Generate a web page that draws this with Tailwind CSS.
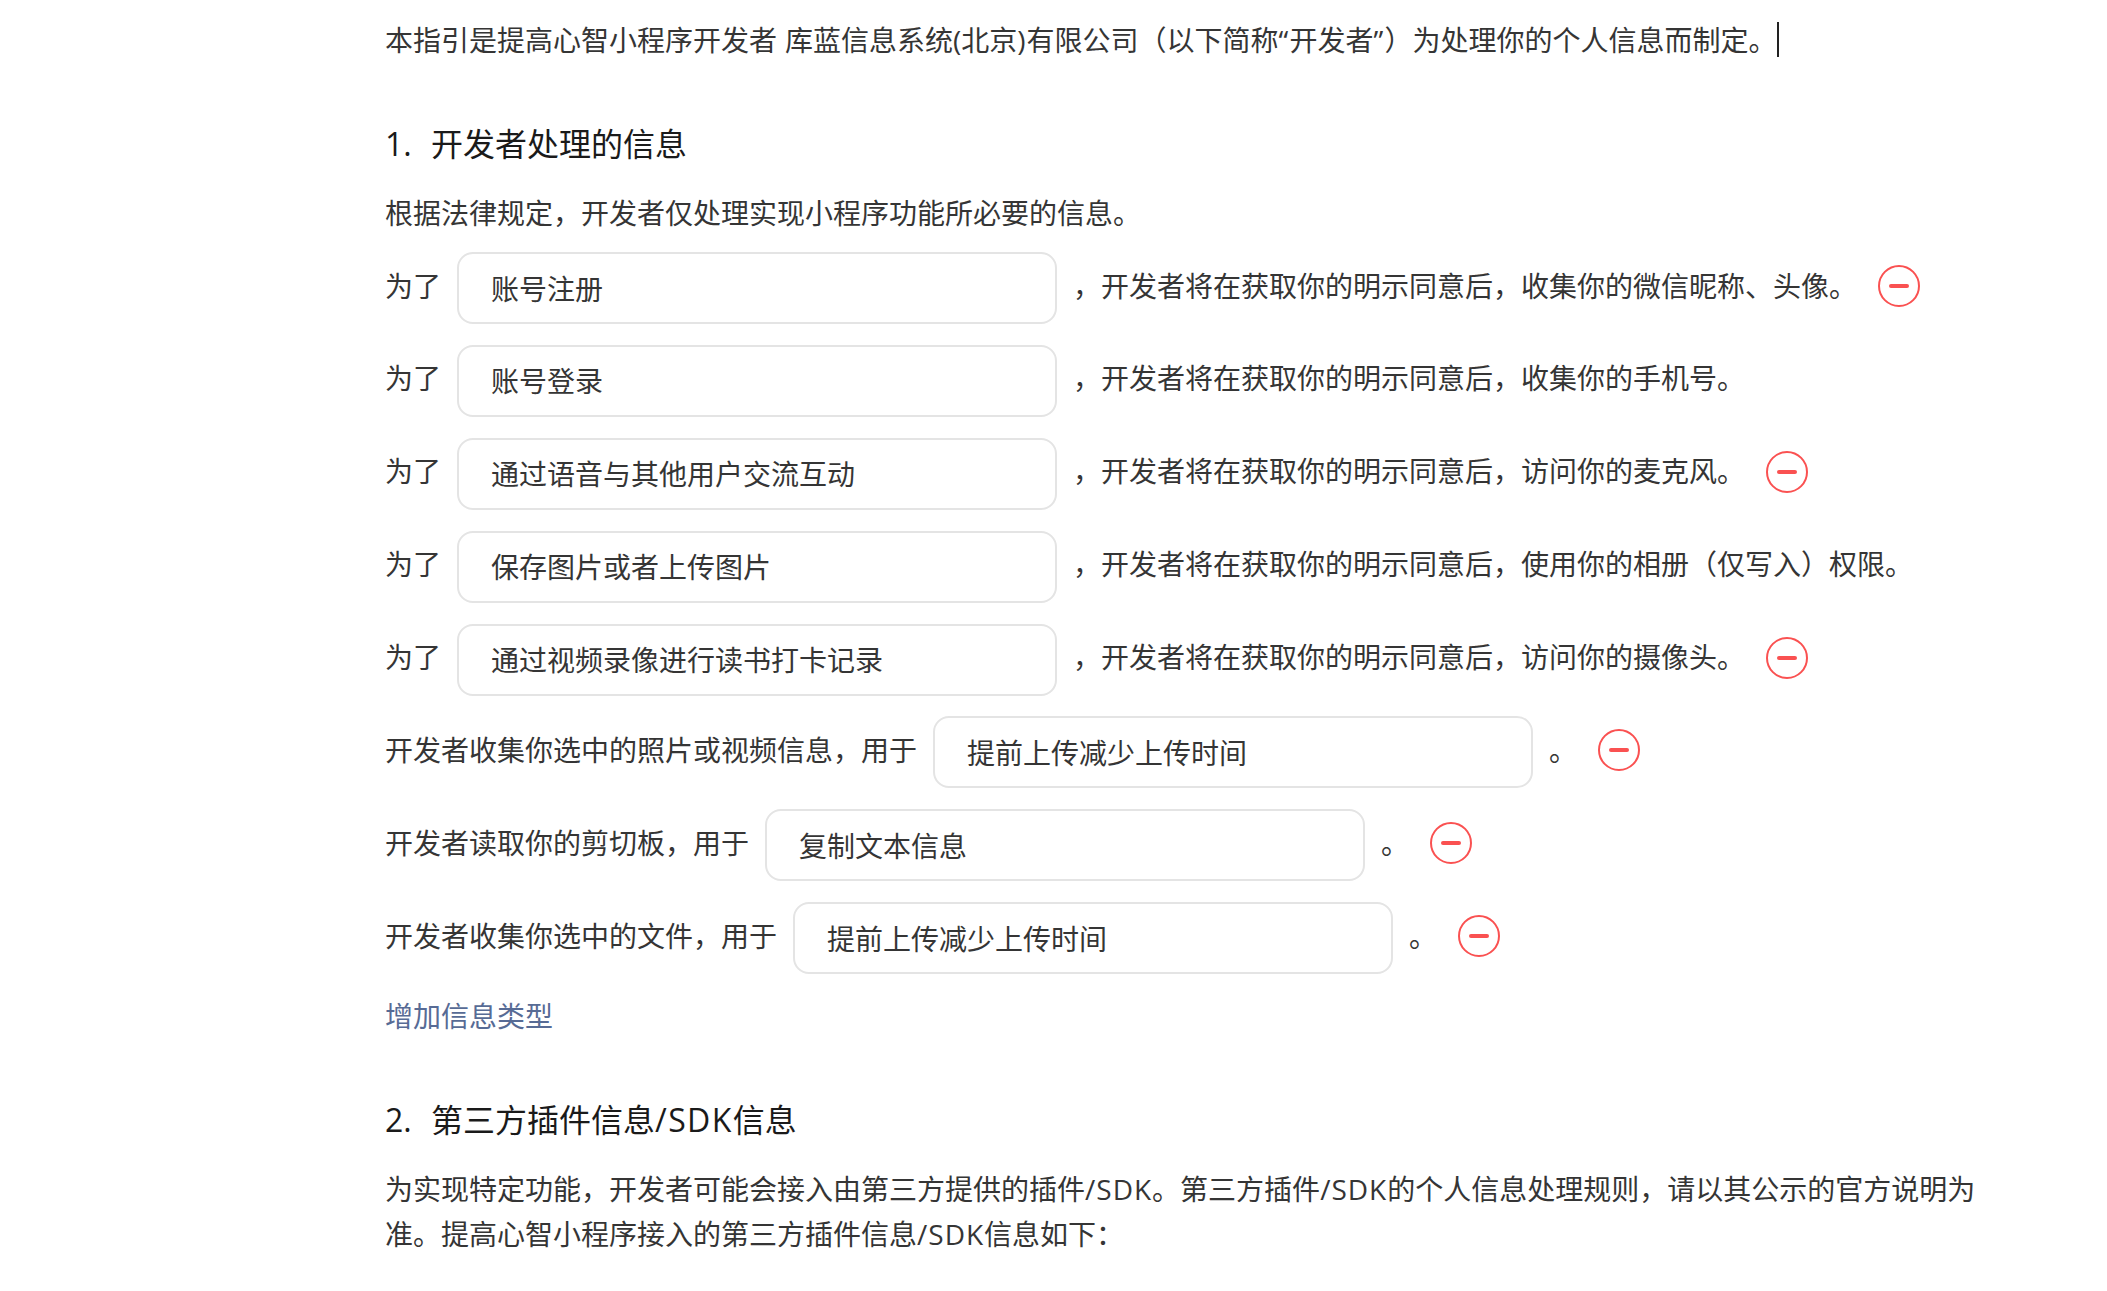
<!DOCTYPE html>
<html lang="zh-CN">
<head>
    <meta charset="UTF-8">
    <meta name="viewport" content="width=device-width, initial-scale=1.0">
    <title>隐私保护指引</title>
    <script src="https://cdn.jsdelivr.net/npm/@tailwindcss/browser@4"></script>
</head>
<body class="bg-white overflow-hidden">
    <main class="pl-[385px] pt-[18px] text-[28px] leading-[45px] text-[#353535] font-['Open_Sans','Noto_Sans_CJK_SC',sans-serif] [text-spacing-trim:space-all] whitespace-nowrap">

        <div class="flex items-center h-[45px]">
            <p>本指引是提高心智小程序开发者<span class="inline-block w-2">&nbsp;</span>库蓝信息系统(北京<span class="tracking-[1px]">)</span>有限公司（以下简称<span class="inline-block w-[11px]">“</span>开发者<span class="inline-block w-[11px]">”</span>）为处理你的个人信息而制定。</p>
            <span class="w-0.5 h-[35px] bg-[#222] -mt-[2px]"></span>
        </div>

        <h2 class="flex mt-[57px] h-12 text-[32px] leading-[48px] text-[#1a1a1a]"><span class="w-[46px]">1.</span>开发者处理的信息</h2>
        <p class="mt-[23px]">根据法律规定，开发者仅处理实现小程序功能所必要的信息。</p>

        <!-- purpose rows -->
        <div class="mt-[16px] flex flex-col gap-[20.9px]">
            <div class="flex items-center h-[72px]">
                <span class="-mt-1">为了</span>
                <div class="mx-4 w-[600px] h-[72px] px-8 pt-0.5 border-2 border-[#e4e4e4] rounded-2xl flex items-center shrink-0">账号注册</div>
                <span class="-mt-1">，开发者将在获取你的明示同意后，收集你的微信昵称、头像。</span>
                <button class="ml-[21px] -mt-1"><svg width="42" height="42" viewBox="0 0 42 42" fill="none" stroke="#fa5151"><circle cx="21" cy="21" r="20" stroke-width="2"/><path d="M13 21h16" stroke-width="4" stroke-linecap="round"/></svg></button>
            </div>
            <div class="flex items-center h-[72px]">
                <span class="-mt-1">为了</span>
                <div class="mx-4 w-[600px] h-[72px] px-8 pt-0.5 border-2 border-[#e4e4e4] rounded-2xl flex items-center shrink-0">账号登录</div>
                <span class="-mt-1">，开发者将在获取你的明示同意后，收集你的手机号。</span>
            </div>
            <div class="flex items-center h-[72px]">
                <span class="-mt-1">为了</span>
                <div class="mx-4 w-[600px] h-[72px] px-8 pt-0.5 border-2 border-[#e4e4e4] rounded-2xl flex items-center shrink-0">通过语音与其他用户交流互动</div>
                <span class="-mt-1">，开发者将在获取你的明示同意后，访问你的麦克风。</span>
                <button class="ml-[21px] -mt-1"><svg width="42" height="42" viewBox="0 0 42 42" fill="none" stroke="#fa5151"><circle cx="21" cy="21" r="20" stroke-width="2"/><path d="M13 21h16" stroke-width="4" stroke-linecap="round"/></svg></button>
            </div>
            <div class="flex items-center h-[72px]">
                <span class="-mt-1">为了</span>
                <div class="mx-4 w-[600px] h-[72px] px-8 pt-0.5 border-2 border-[#e4e4e4] rounded-2xl flex items-center shrink-0">保存图片或者上传图片</div>
                <span class="-mt-1">，开发者将在获取你的明示同意后，使用你的相册（仅写入）权限。</span>
            </div>
            <div class="flex items-center h-[72px]">
                <span class="-mt-1">为了</span>
                <div class="mx-4 w-[600px] h-[72px] px-8 pt-0.5 border-2 border-[#e4e4e4] rounded-2xl flex items-center shrink-0">通过视频录像进行读书打卡记录</div>
                <span class="-mt-1">，开发者将在获取你的明示同意后，访问你的摄像头。</span>
                <button class="ml-[21px] -mt-1"><svg width="42" height="42" viewBox="0 0 42 42" fill="none" stroke="#fa5151"><circle cx="21" cy="21" r="20" stroke-width="2"/><path d="M13 21h16" stroke-width="4" stroke-linecap="round"/></svg></button>
            </div>
            <div class="flex items-center h-[72px]">
                <span class="-mt-1">开发者收集你选中的照片或视频信息，用于</span>
                <div class="mx-4 w-[600px] h-[72px] px-8 pt-0.5 border-2 border-[#e4e4e4] rounded-2xl flex items-center shrink-0">提前上传减少上传时间</div>
                <span class="-mt-1">。</span>
                <button class="ml-[21px] -mt-1"><svg width="42" height="42" viewBox="0 0 42 42" fill="none" stroke="#fa5151"><circle cx="21" cy="21" r="20" stroke-width="2"/><path d="M13 21h16" stroke-width="4" stroke-linecap="round"/></svg></button>
            </div>
            <div class="flex items-center h-[72px]">
                <span class="-mt-1">开发者读取你的剪切板，用于</span>
                <div class="mx-4 w-[600px] h-[72px] px-8 pt-0.5 border-2 border-[#e4e4e4] rounded-2xl flex items-center shrink-0">复制文本信息</div>
                <span class="-mt-1">。</span>
                <button class="ml-[21px] -mt-1"><svg width="42" height="42" viewBox="0 0 42 42" fill="none" stroke="#fa5151"><circle cx="21" cy="21" r="20" stroke-width="2"/><path d="M13 21h16" stroke-width="4" stroke-linecap="round"/></svg></button>
            </div>
            <div class="flex items-center h-[72px]">
                <span class="-mt-1">开发者收集你选中的文件，用于</span>
                <div class="mx-4 w-[600px] h-[72px] px-8 pt-0.5 border-2 border-[#e4e4e4] rounded-2xl flex items-center shrink-0">提前上传减少上传时间</div>
                <span class="-mt-1">。</span>
                <button class="ml-[21px] -mt-1"><svg width="42" height="42" viewBox="0 0 42 42" fill="none" stroke="#fa5151"><circle cx="21" cy="21" r="20" stroke-width="2"/><path d="M13 21h16" stroke-width="4" stroke-linecap="round"/></svg></button>
            </div>
        </div>
        <a href="#" class="block w-fit mt-[20px] text-[#576b95]">增加信息类型</a>

        <h2 class="flex mt-[57px] h-12 text-[32px] leading-[48px] text-[#1a1a1a]"><span class="w-[46px]">2.</span>第三方插件信息<span class="tracking-[1.4px]">/SDK</span>信息</h2>
        <p class="mt-[23px]">为实现特定功能，开发者可能会接入由第三方提供的插件<span class="tracking-[1px]">/SDK</span>。第三方插件<span class="tracking-[1px]">/SDK</span>的个人信息处理规则，请以其公示的官方说明为<br>准。提高心智小程序接入的第三方插件信息<span class="tracking-[1px]">/SDK</span>信息如下：</p>
    </main>
</body>
</html>
